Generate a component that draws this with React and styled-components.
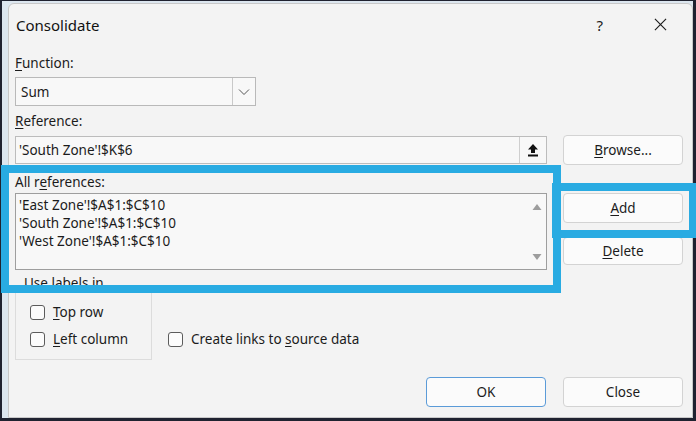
import React from 'react';
import styled, { createGlobalStyle } from 'styled-components';

const GlobalStyle = createGlobalStyle`
  html, body { margin: 0; padding: 0; background: #1f2230; }
  * { box-sizing: border-box; }
`;

const U = styled.span`
  text-decoration: underline;
  text-underline-offset: 2px;
`;

export default function App() {
  return (
    <>
      <GlobalStyle />
      <S.Screen>
        <S.Backdrop>
          <S.Dialog>
            <S.TitleBar>
              <S.Title>Consolidate</S.Title>
              <S.TitleButtons>
                <S.HelpButton>?</S.HelpButton>
                <S.CloseIcon viewBox="0 0 14 14">
                  <path d="M1 1 L13 13 M13 1 L1 13" stroke="#1b1b1b" strokeWidth="1.2" fill="none" />
                </S.CloseIcon>
              </S.TitleButtons>
            </S.TitleBar>

            <S.Body>
              <S.Label $top={4}><U>F</U>unction:</S.Label>
              <S.Select>
                <S.SelectValue>Sum</S.SelectValue>
                <S.SelectArrow>
                  <svg width="12" height="8" viewBox="0 0 12 8">
                    <path d="M1 1.5 L6 6.5 L11 1.5" stroke="#555" strokeWidth="1" fill="none" />
                  </svg>
                </S.SelectArrow>
              </S.Select>

              <S.Label $top={7}><U>R</U>eference:</S.Label>
              <S.Row>
                <S.RefInput>
                  <S.RefValue>'South Zone'!$K$6</S.RefValue>
                  <S.PickButton>
                    <svg width="12" height="14" viewBox="0 0 12 14">
                      <path d="M6 1 L11 6.5 H8 V10 H4 V6.5 H1 Z" fill="#111" />
                      <rect x="1" y="11.5" width="10" height="2" fill="#111" />
                    </svg>
                  </S.PickButton>
                </S.RefInput>
                <S.Button><U>B</U>rowse...</S.Button>
              </S.Row>

              <S.Label $top={9} $bottom={3}>All r<U>e</U>ferences:</S.Label>
              <S.Row $align="flex-start">
                <S.ListBox>
                  <S.ListLines>
                    <div>'East Zone'!$A$1:$C$10</div>
                    <div>'South Zone'!$A$1:$C$10</div>
                    <div>'West Zone'!$A$1:$C$10</div>
                  </S.ListLines>
                  <S.ScrollTrack>
                    <S.ScrollArrow viewBox="0 0 10 8">
                      <path d="M5 1 L9.5 7 H0.5 Z" fill="#9d9d9d" />
                    </S.ScrollArrow>
                    <S.ScrollArrow viewBox="0 0 10 8">
                      <path d="M0.5 1 H9.5 L5 7 Z" fill="#9d9d9d" />
                    </S.ScrollArrow>
                  </S.ScrollTrack>
                </S.ListBox>
                <S.ButtonStack>
                  <S.Button><U>A</U>dd</S.Button>
                  <S.Button $h={28}><U>D</U>elete</S.Button>
                </S.ButtonStack>
              </S.Row>

              <S.OptionsRow>
                <S.GroupBox>
                  <S.GroupLegend>Use labels in</S.GroupLegend>
                  <S.Check>
                    <S.Box />
                    <span><U>T</U>op row</span>
                  </S.Check>
                  <S.Check>
                    <S.Box />
                    <span><U>L</U>eft column</span>
                  </S.Check>
                </S.GroupBox>
                <S.Check $link>
                  <S.Box />
                  <span>Create links to <U>s</U>ource data</span>
                </S.Check>
              </S.OptionsRow>

              <S.Footer>
                <S.Button $primary>OK</S.Button>
                <S.Button>Close</S.Button>
              </S.Footer>
            </S.Body>

            <S.Highlight $x={-8} $y={161} $w={560} $h={128} />
            <S.Highlight $x={543} $y={179} $w={145} $h={55} />
          </S.Dialog>
        </S.Backdrop>
      </S.Screen>
    </>
  );
}

const S = {
  Screen: styled.div`
    width: 696px;
    height: 421px;
    padding: 1px 3px 3px 2px;
    background: #1f2230;
    overflow: hidden;
  `,
  Backdrop: styled.div`
    height: 100%;
    padding: 2px 0 0 6px;
    background: #dce6ef;
  `,
  Dialog: styled.div`
    position: relative;
    height: 100%;
    background: #f3f3f3;
    border: 1px solid #c8c8c8;
    border-radius: 6px 6px 0 0;
    font-family: 'Noto Sans', 'Open Sans', sans-serif;
    font-size: 13.5px;
    color: #1b1b1b;
  `,
  TitleBar: styled.div`
    display: flex;
    align-items: center;
    justify-content: space-between;
    height: 41px;
    padding: 0 25px 0 7px;
  `,
  Title: styled.div`
    font-size: 15px;
    color: #111;
  `,
  TitleButtons: styled.div`
    display: flex;
    align-items: center;
    gap: 51px;
  `,
  HelpButton: styled.span`
    font-size: 15px;
  `,
  CloseIcon: styled.svg`
    width: 13px;
    height: 13px;
  `,
  Body: styled.div`
    padding: 6px 9px 0 6px;
  `,
  Label: styled.div`
    line-height: 16px;
    margin: ${(p) => p.$top}px 0 ${(p) => p.$bottom ?? 6}px 0;
  `,
  Select: styled.div`
    display: flex;
    width: 241px;
    height: 29px;
    background: #f8f8f8;
    border: 1px solid #b9b9b9;
  `,
  SelectValue: styled.div`
    flex: 1;
    display: flex;
    align-items: center;
    padding-left: 5px;
  `,
  SelectArrow: styled.div`
    width: 23px;
    display: flex;
    align-items: center;
    justify-content: center;
    border-left: 1px solid #c9c9c9;
  `,
  Row: styled.div`
    display: flex;
    align-items: ${(p) => p.$align || 'center'};
    gap: 16px;
  `,
  RefInput: styled.div`
    display: flex;
    width: 532px;
    height: 28px;
    background: #f8f8f8;
    border: 1px solid #bcbcbc;
  `,
  RefValue: styled.div`
    flex: 1;
    display: flex;
    align-items: center;
    padding-left: 3px;
  `,
  PickButton: styled.div`
    width: 27px;
    display: flex;
    align-items: center;
    justify-content: center;
    border-left: 1px solid #cfcfcf;
  `,
  Button: styled.div`
    display: flex;
    align-items: center;
    justify-content: center;
    width: 120px;
    height: ${(p) => p.$h ?? 30}px;
    background: #fbfbfb;
    border: 1px solid ${(p) => (p.$primary ? '#5b9bd8' : '#d3d3d3')};
    border-radius: 4px;
    color: #1b1b1b;
  `,
  ListBox: styled.div`
    display: flex;
    width: 532px;
    height: 77px;
    background: #f8f8f8;
    border: 1px solid #9e9e9e;
  `,
  ListLines: styled.div`
    flex: 1;
    padding: 2px 0 0 3px;
    line-height: 18px;
  `,
  ScrollTrack: styled.div`
    width: 18px;
    display: flex;
    flex-direction: column;
    justify-content: space-between;
    align-items: center;
    padding: 9px 0 8px;
  `,
  ScrollArrow: styled.svg`
    width: 10px;
    height: 8px;
  `,
  ButtonStack: styled.div`
    display: flex;
    flex-direction: column;
    gap: 14px;
  `,
  OptionsRow: styled.div`
    display: flex;
    align-items: flex-end;
    gap: 16px;
    margin-top: 16px;
  `,
  GroupBox: styled.div`
    position: relative;
    width: 137px;
    height: 74px;
    border: 1px solid #dcdcdc;
    padding: 16px 0 0 14px;
    display: flex;
    flex-direction: column;
    gap: 9px;
  `,
  GroupLegend: styled.div`
    position: absolute;
    top: -12px;
    left: 5px;
    padding: 0 3px;
    line-height: 16px;
    background: #f3f3f3;
  `,
  Check: styled.label`
    display: flex;
    align-items: center;
    gap: 8px;
    line-height: 18px;
    margin-bottom: ${(p) => (p.$link ? '12px' : '0')};
  `,
  Box: styled.span`
    width: 15px;
    height: 15px;
    border: 1px solid #5c5c5c;
    border-radius: 3px;
    background: #fcfcfc;
  `,
  Footer: styled.div`
    display: flex;
    justify-content: flex-end;
    gap: 17px;
    margin-top: 17px;
  `,
  Highlight: styled.div`
    position: absolute;
    left: ${(p) => p.$x}px;
    top: ${(p) => p.$y}px;
    width: ${(p) => p.$w}px;
    height: ${(p) => p.$h}px;
    border: 8px solid #29abe2;
    pointer-events: none;
  `,
};
